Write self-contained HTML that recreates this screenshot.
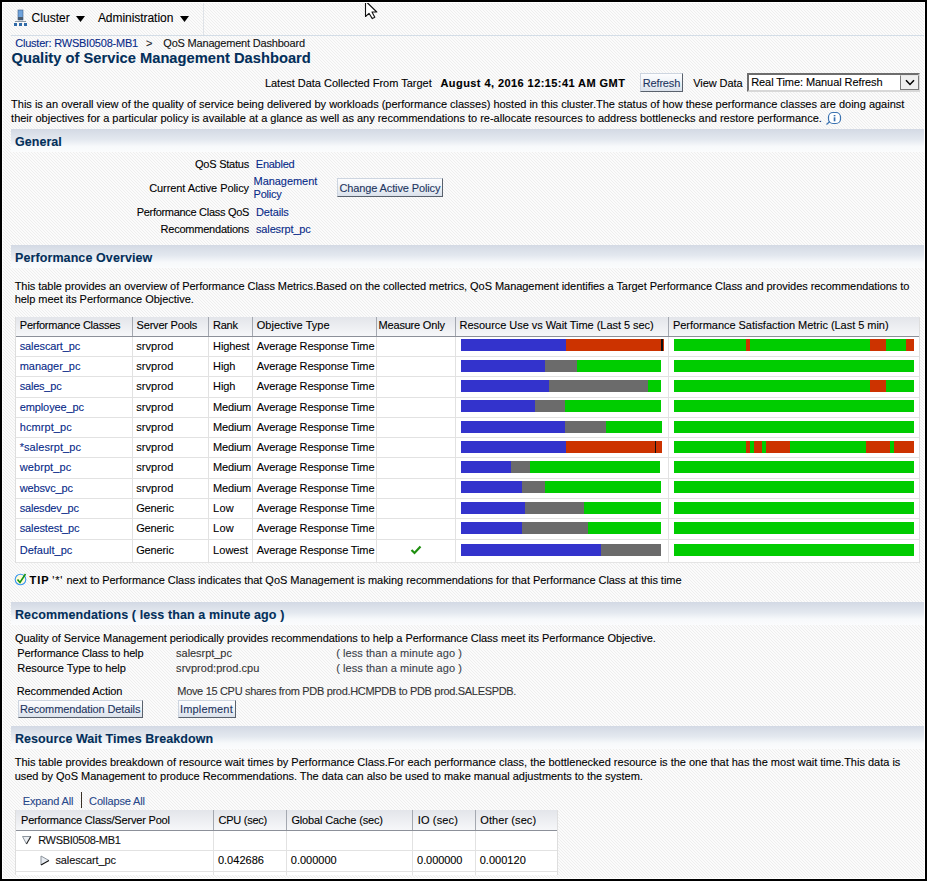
<!DOCTYPE html><html><head><meta charset='utf-8'><style>
html,body{margin:0;padding:0;}
body{width:927px;height:881px;position:relative;overflow:hidden;background:#fafafa;font-family:'Liberation Sans', sans-serif;}
.t{position:absolute;white-space:pre;font-family:'Liberation Sans', sans-serif;-webkit-text-stroke-width:0.1px;}
.btn{position:absolute;border:1px solid #cdd5e0;border-right-color:#59616c;border-bottom-color:#59616c;background:linear-gradient(#fdfdfe,#eef2f7 50%,#dae1eb);}
.sel{position:absolute;box-sizing:border-box;border:2px solid #6d6d6d;border-right-color:#d8d8d8;border-bottom-color:#d8d8d8;background:#fff;}
.selbtn{position:absolute;box-sizing:border-box;border:1px solid #7a7a7a;border-top-color:#e6e6e6;background:#efefef;}
</style></head><body><svg style="position:absolute;left:0;top:0" width="927" height="881" shape-rendering="crispEdges">
<defs><pattern id="hp" width="3" height="3" patternUnits="userSpaceOnUse"><rect width="3" height="3" fill="#fbfbfb"/><rect x="2" y="0" width="1" height="1" fill="#eeeeee"/><rect x="0" y="1" width="1" height="1" fill="#eeeeee"/><rect x="1" y="2" width="1" height="1" fill="#eeeeee"/></pattern></defs>
<rect width="927" height="881" fill="url(#hp)"/></svg><svg style="position:absolute;left:0;top:0" width="40" height="30">
<rect x="18" y="10" width="5" height="7" fill="#6fa3dc"/><rect x="18" y="17" width="5" height="3" fill="#4b5a6b"/>
<rect x="18" y="10" width="5" height="10" fill="none" stroke="#3f5f86" stroke-width="0.6"/>
<rect x="15" y="21" width="11" height="1" fill="#8a96a3"/>
<rect x="14" y="23" width="3" height="3" fill="#2f6aa8"/><rect x="19" y="23" width="3" height="3" fill="#2f6aa8"/><rect x="24" y="23" width="3" height="3" fill="#2f6aa8"/>
</svg><svg style="position:absolute;left:76px;top:16px" width="10" height="7"><polygon points="0,0 9,0 4.5,6" fill="#000"/></svg><svg style="position:absolute;left:180px;top:16px" width="10" height="7"><polygon points="0,0 9,0 4.5,6" fill="#000"/></svg><div style="position:absolute;left:203px;top:2px;width:1px;height:33px;background:#dfe3e8"></div><div style="position:absolute;left:11px;top:35px;width:914px;height:1px;background:#d3dde7"></div><div class="btn" style="left:640px;top:73px;width:41px;height:17px"></div><div class="sel" style="left:747px;top:73px;width:173px;height:19px"></div><div class="selbtn" style="left:900px;top:75px;width:19px;height:15px"></div><svg style="position:absolute;left:905px;top:79px" width="11" height="8"><polyline points="1,1.2 5,5.5 9,1.2" fill="none" stroke="#000" stroke-width="1.5"/></svg><svg style="position:absolute;left:825px;top:110px" width="18" height="16">
<rect x="3.5" y="2.5" width="12" height="11" rx="4.5" fill="#fff" stroke="#3a72b0" stroke-width="1.2"/>
<line x1="1.5" y1="14.5" x2="4.8" y2="11.5" stroke="#3a72b0" stroke-width="1.3"/>
<rect x="8.7" y="5" width="1.7" height="1.3" fill="#3a72b0"/><rect x="8.7" y="7.3" width="1.7" height="4" fill="#3a72b0"/>
</svg><div style="position:absolute;left:11px;top:129px;width:913px;height:23px;background:linear-gradient(#d3d9e4,#e3e8ef 45%,#f7f9fb 75%,#fbfcfd)"></div><div class="btn" style="left:337px;top:178px;width:104px;height:17px"></div><div style="position:absolute;left:11px;top:245px;width:913px;height:23px;background:linear-gradient(#d3d9e4,#e3e8ef 45%,#f7f9fb 75%,#fbfcfd)"></div><div style="position:absolute;left:15px;top:317px;width:905px;height:19px;background:linear-gradient(#e3e5ea,#f6f7f9)"></div><div style="position:absolute;left:15px;top:336px;width:905px;height:1px;background:#8c9099"></div><div style="position:absolute;left:15px;top:337px;width:905px;height:225px;background:#fff"></div><div style="position:absolute;left:15px;top:356px;width:905px;height:1px;background:#e2e2e2"></div><div style="position:absolute;left:15px;top:376px;width:905px;height:1px;background:#e2e2e2"></div><div style="position:absolute;left:15px;top:397px;width:905px;height:1px;background:#e2e2e2"></div><div style="position:absolute;left:15px;top:417px;width:905px;height:1px;background:#e2e2e2"></div><div style="position:absolute;left:15px;top:437px;width:905px;height:1px;background:#e2e2e2"></div><div style="position:absolute;left:15px;top:457px;width:905px;height:1px;background:#e2e2e2"></div><div style="position:absolute;left:15px;top:478px;width:905px;height:1px;background:#e2e2e2"></div><div style="position:absolute;left:15px;top:498px;width:905px;height:1px;background:#e2e2e2"></div><div style="position:absolute;left:15px;top:518px;width:905px;height:1px;background:#e2e2e2"></div><div style="position:absolute;left:15px;top:539px;width:905px;height:1px;background:#e2e2e2"></div><div style="position:absolute;left:15px;top:562px;width:905px;height:1px;background:#e4e4e4"></div><div style="position:absolute;left:15px;top:317px;width:1px;height:246px;background:#dedede"></div><div style="position:absolute;left:919px;top:317px;width:1px;height:246px;background:#dedede"></div><div style="position:absolute;left:132px;top:317px;width:1px;height:19px;background:#a4a8b0"></div><div style="position:absolute;left:132px;top:337px;width:1px;height:226px;background:#e2e2e2"></div><div style="position:absolute;left:208px;top:317px;width:1px;height:19px;background:#a4a8b0"></div><div style="position:absolute;left:208px;top:337px;width:1px;height:226px;background:#e2e2e2"></div><div style="position:absolute;left:252px;top:317px;width:1px;height:19px;background:#a4a8b0"></div><div style="position:absolute;left:252px;top:337px;width:1px;height:226px;background:#e2e2e2"></div><div style="position:absolute;left:376px;top:317px;width:1px;height:19px;background:#a4a8b0"></div><div style="position:absolute;left:376px;top:337px;width:1px;height:226px;background:#e2e2e2"></div><div style="position:absolute;left:455px;top:317px;width:1px;height:19px;background:#a4a8b0"></div><div style="position:absolute;left:455px;top:337px;width:1px;height:226px;background:#e2e2e2"></div><div style="position:absolute;left:668px;top:317px;width:1px;height:19px;background:#a4a8b0"></div><div style="position:absolute;left:668px;top:337px;width:1px;height:226px;background:#e2e2e2"></div><div style="position:absolute;left:461px;top:339px;width:202px;height:12px"><div style="position:absolute;left:0px;top:0;width:105px;height:12px;background:#3333cc"></div><div style="position:absolute;left:105px;top:0;width:95px;height:12px;background:#cc3300"></div><div style="position:absolute;left:200px;top:0;width:1.5px;height:12px;background:#111"></div><div style="position:absolute;left:201.5px;top:0;width:1px;height:12px;background:#cc3300"></div></div><div style="position:absolute;left:674px;top:339px;width:240px;height:12px"><div style="position:absolute;left:0px;top:0;width:72px;height:12px;background:#00cc00"></div><div style="position:absolute;left:72px;top:0;width:4px;height:12px;background:#cc3300"></div><div style="position:absolute;left:76px;top:0;width:120px;height:12px;background:#00cc00"></div><div style="position:absolute;left:196px;top:0;width:16px;height:12px;background:#cc3300"></div><div style="position:absolute;left:212px;top:0;width:20px;height:12px;background:#00cc00"></div><div style="position:absolute;left:232px;top:0;width:8px;height:12px;background:#cc3300"></div></div><div style="position:absolute;left:461px;top:360px;width:202px;height:12px"><div style="position:absolute;left:0px;top:0;width:84px;height:12px;background:#3333cc"></div><div style="position:absolute;left:84px;top:0;width:32px;height:12px;background:#6b6b6b"></div><div style="position:absolute;left:116px;top:0;width:84px;height:12px;background:#00cc00"></div></div><div style="position:absolute;left:674px;top:360px;width:240px;height:12px"><div style="position:absolute;left:0px;top:0;width:240px;height:12px;background:#00cc00"></div></div><div style="position:absolute;left:461px;top:380px;width:202px;height:12px"><div style="position:absolute;left:0px;top:0;width:88px;height:12px;background:#3333cc"></div><div style="position:absolute;left:88px;top:0;width:99px;height:12px;background:#6b6b6b"></div><div style="position:absolute;left:187px;top:0;width:13px;height:12px;background:#00cc00"></div></div><div style="position:absolute;left:674px;top:380px;width:240px;height:12px"><div style="position:absolute;left:0px;top:0;width:196px;height:12px;background:#00cc00"></div><div style="position:absolute;left:196px;top:0;width:16px;height:12px;background:#cc3300"></div><div style="position:absolute;left:212px;top:0;width:28px;height:12px;background:#00cc00"></div></div><div style="position:absolute;left:461px;top:400px;width:202px;height:12px"><div style="position:absolute;left:0px;top:0;width:74px;height:12px;background:#3333cc"></div><div style="position:absolute;left:74px;top:0;width:30px;height:12px;background:#6b6b6b"></div><div style="position:absolute;left:104px;top:0;width:96px;height:12px;background:#00cc00"></div></div><div style="position:absolute;left:674px;top:400px;width:240px;height:12px"><div style="position:absolute;left:0px;top:0;width:240px;height:12px;background:#00cc00"></div></div><div style="position:absolute;left:461px;top:421px;width:202px;height:12px"><div style="position:absolute;left:0px;top:0;width:104px;height:12px;background:#3333cc"></div><div style="position:absolute;left:104px;top:0;width:41px;height:12px;background:#6b6b6b"></div><div style="position:absolute;left:145px;top:0;width:56px;height:12px;background:#00cc00"></div></div><div style="position:absolute;left:674px;top:421px;width:240px;height:12px"><div style="position:absolute;left:0px;top:0;width:240px;height:12px;background:#00cc00"></div></div><div style="position:absolute;left:461px;top:441px;width:202px;height:12px"><div style="position:absolute;left:0px;top:0;width:105px;height:12px;background:#3333cc"></div><div style="position:absolute;left:105px;top:0;width:89px;height:12px;background:#cc3300"></div><div style="position:absolute;left:194px;top:0;width:1.2px;height:12px;background:#111"></div><div style="position:absolute;left:195.20000000000005px;top:0;width:5.8px;height:12px;background:#cc3300"></div></div><div style="position:absolute;left:674px;top:441px;width:240px;height:12px"><div style="position:absolute;left:0px;top:0;width:72px;height:12px;background:#00cc00"></div><div style="position:absolute;left:72px;top:0;width:4px;height:12px;background:#cc3300"></div><div style="position:absolute;left:76px;top:0;width:4px;height:12px;background:#00cc00"></div><div style="position:absolute;left:80px;top:0;width:8px;height:12px;background:#cc3300"></div><div style="position:absolute;left:88px;top:0;width:4px;height:12px;background:#00cc00"></div><div style="position:absolute;left:92px;top:0;width:24px;height:12px;background:#cc3300"></div><div style="position:absolute;left:116px;top:0;width:76px;height:12px;background:#00cc00"></div><div style="position:absolute;left:192px;top:0;width:24px;height:12px;background:#cc3300"></div><div style="position:absolute;left:216px;top:0;width:4px;height:12px;background:#00cc00"></div><div style="position:absolute;left:220px;top:0;width:20px;height:12px;background:#cc3300"></div></div><div style="position:absolute;left:461px;top:461px;width:202px;height:12px"><div style="position:absolute;left:0px;top:0;width:50px;height:12px;background:#3333cc"></div><div style="position:absolute;left:50px;top:0;width:19px;height:12px;background:#6b6b6b"></div><div style="position:absolute;left:69px;top:0;width:130px;height:12px;background:#00cc00"></div></div><div style="position:absolute;left:674px;top:461px;width:240px;height:12px"><div style="position:absolute;left:0px;top:0;width:240px;height:12px;background:#00cc00"></div></div><div style="position:absolute;left:461px;top:481px;width:202px;height:12px"><div style="position:absolute;left:0px;top:0;width:61px;height:12px;background:#3333cc"></div><div style="position:absolute;left:61px;top:0;width:23px;height:12px;background:#6b6b6b"></div><div style="position:absolute;left:84px;top:0;width:116px;height:12px;background:#00cc00"></div></div><div style="position:absolute;left:674px;top:481px;width:240px;height:12px"><div style="position:absolute;left:0px;top:0;width:240px;height:12px;background:#00cc00"></div></div><div style="position:absolute;left:461px;top:502px;width:202px;height:12px"><div style="position:absolute;left:0px;top:0;width:64px;height:12px;background:#3333cc"></div><div style="position:absolute;left:64px;top:0;width:59px;height:12px;background:#6b6b6b"></div><div style="position:absolute;left:123px;top:0;width:77px;height:12px;background:#00cc00"></div></div><div style="position:absolute;left:674px;top:502px;width:240px;height:12px"><div style="position:absolute;left:0px;top:0;width:240px;height:12px;background:#00cc00"></div></div><div style="position:absolute;left:461px;top:522px;width:202px;height:12px"><div style="position:absolute;left:0px;top:0;width:61px;height:12px;background:#3333cc"></div><div style="position:absolute;left:61px;top:0;width:66px;height:12px;background:#6b6b6b"></div><div style="position:absolute;left:127px;top:0;width:73px;height:12px;background:#00cc00"></div></div><div style="position:absolute;left:674px;top:522px;width:240px;height:12px"><div style="position:absolute;left:0px;top:0;width:240px;height:12px;background:#00cc00"></div></div><div style="position:absolute;left:461px;top:544px;width:202px;height:12px"><div style="position:absolute;left:0px;top:0;width:140px;height:12px;background:#3333cc"></div><div style="position:absolute;left:140px;top:0;width:60px;height:12px;background:#6b6b6b"></div></div><div style="position:absolute;left:674px;top:544px;width:240px;height:12px"><div style="position:absolute;left:0px;top:0;width:240px;height:12px;background:#00cc00"></div></div><svg style="position:absolute;left:410px;top:545px" width="12" height="10"><polyline points="1.5,5 4.5,8 10.5,1.5" fill="none" stroke="#1f8f10" stroke-width="2.2"/></svg><svg style="position:absolute;left:13px;top:570px" width="16" height="17">
<circle cx="7.5" cy="9.5" r="5.3" fill="#fffbd8" stroke="#3d98f0" stroke-width="1.1"/>
<polyline points="4.5,9.5 7,12.5 12.5,4" fill="none" stroke="#139413" stroke-width="1.6"/>
</svg><div style="position:absolute;left:11px;top:602px;width:913px;height:23px;background:linear-gradient(#d3d9e4,#e3e8ef 45%,#f7f9fb 75%,#fbfcfd)"></div><div class="btn" style="left:18px;top:700px;width:123px;height:16px"></div><div class="btn" style="left:178px;top:700px;width:56px;height:16px"></div><div style="position:absolute;left:11px;top:726px;width:913px;height:23px;background:linear-gradient(#d3d9e4,#e3e8ef 45%,#f7f9fb 75%,#fbfcfd)"></div><div style="position:absolute;left:81px;top:792px;width:1px;height:16px;background:#3a3026"></div><div style="position:absolute;left:15px;top:810px;width:543px;height:20px;background:linear-gradient(#e3e5ea,#f6f7f9)"></div><div style="position:absolute;left:15px;top:830px;width:543px;height:1px;background:#8c9099"></div><div style="position:absolute;left:15px;top:831px;width:543px;height:44px;background:#fff"></div><div style="position:absolute;left:15px;top:850px;width:543px;height:1px;background:#e2e2e2"></div><div style="position:absolute;left:15px;top:871px;width:543px;height:1px;background:#e2e2e2"></div><div style="position:absolute;left:15px;top:810px;width:1px;height:65px;background:#dedede"></div><div style="position:absolute;left:557px;top:810px;width:1px;height:65px;background:#dedede"></div><div style="position:absolute;left:213px;top:810px;width:1px;height:20px;background:#a4a8b0"></div><div style="position:absolute;left:213px;top:831px;width:1px;height:44px;background:#e2e2e2"></div><div style="position:absolute;left:286px;top:810px;width:1px;height:20px;background:#a4a8b0"></div><div style="position:absolute;left:286px;top:831px;width:1px;height:44px;background:#e2e2e2"></div><div style="position:absolute;left:412px;top:810px;width:1px;height:20px;background:#a4a8b0"></div><div style="position:absolute;left:412px;top:831px;width:1px;height:44px;background:#e2e2e2"></div><div style="position:absolute;left:475px;top:810px;width:1px;height:20px;background:#a4a8b0"></div><div style="position:absolute;left:475px;top:831px;width:1px;height:44px;background:#e2e2e2"></div><svg style="position:absolute;left:21px;top:835px" width="12" height="11"><polygon points="1.5,1.5 9.8,1.5 5.5,9" fill="#eceff3"/><line x1="1.5" y1="1.5" x2="9.8" y2="1.5" stroke="#8c949c" stroke-width="1"/><line x1="1.5" y1="1.5" x2="5.5" y2="9" stroke="#8c949c" stroke-width="1"/><line x1="9.8" y1="1.5" x2="5.5" y2="9" stroke="#222" stroke-width="1.1"/></svg><svg style="position:absolute;left:40px;top:855px" width="11" height="11"><polygon points="1,1 9,5.5 1,10" fill="#e8ecf2"/><line x1="1" y1="1" x2="1" y2="10" stroke="#8c949c" stroke-width="1"/><line x1="1" y1="1" x2="9" y2="5.5" stroke="#8c949c" stroke-width="1"/><line x1="9" y1="5.5" x2="1" y2="10" stroke="#111" stroke-width="1.1"/></svg><svg style="position:absolute;left:360px;top:0" width="24" height="22"><polygon points="5.5,1 5.5,16.5 9,13.3 12.3,18.6 14.8,17.3 12,12 16.8,12" fill="#fff" stroke="#111" stroke-width="1.1" stroke-linejoin="round"/></svg><div class="t" id="t0" style="top:12px;font-size:12px;line-height:12px;font-weight:normal;color:#000;letter-spacing:0.041px;left:31.5px;">Cluster</div><div class="t" id="t1" style="top:12px;font-size:12px;line-height:12px;font-weight:normal;color:#000;letter-spacing:-0.045px;left:97.9px;">Administration</div><div class="t" id="t2" style="top:38px;font-size:11px;line-height:11px;font-weight:normal;color:#082a88;letter-spacing:-0.217px;left:15.2px;">Cluster: RWSBI0508-MB1</div><div class="t" id="t3" style="top:38px;font-size:11px;line-height:11px;font-weight:normal;color:#222;letter-spacing:0.763px;left:146.1px;">&gt;</div><div class="t" id="t4" style="top:38px;font-size:11px;line-height:11px;font-weight:normal;color:#111;letter-spacing:-0.190px;left:163.3px;">QoS Management Dashboard</div><div class="t" id="t5" style="top:51px;font-size:14.7px;line-height:14.7px;font-weight:bold;color:#032f5a;letter-spacing:0.015px;left:11.5px;">Quality of Service Management Dashboard</div><div class="t" id="t6" style="top:78px;font-size:11px;line-height:11px;font-weight:normal;color:#000;letter-spacing:-0.016px;left:264.9px;">Latest Data Collected From Target</div><div class="t" id="t7" style="top:78px;font-size:11px;line-height:11px;font-weight:bold;color:#000;letter-spacing:0.427px;left:440.5px;">August 4, 2016 12:15:41 AM GMT</div><div class="t" id="t8" style="top:78px;font-size:11px;line-height:11px;font-weight:normal;color:#1e3560;letter-spacing:-0.176px;left:642.8px;">Refresh</div><div class="t" id="t9" style="top:78px;font-size:11px;line-height:11px;font-weight:normal;color:#000;letter-spacing:-0.082px;left:693.3px;">View Data</div><div class="t" id="t10" style="top:77px;font-size:11px;line-height:11px;font-weight:normal;color:#000;letter-spacing:-0.079px;left:751.2px;">Real Time: Manual Refresh</div><div class="t" id="t11" style="top:99px;font-size:11px;line-height:11px;font-weight:normal;color:#000;letter-spacing:-0.007px;left:11.1px;">This is an overall view of the quality of service being delivered by workloads (performance classes) hosted in this cluster.The status of how these performance classes are doing against</div><div class="t" id="t12" style="top:113px;font-size:11px;line-height:11px;font-weight:normal;color:#000;letter-spacing:-0.011px;left:11.1px;">their objectives for a particular policy is available at a glance as well as any recommendations to re-allocate resources to address bottlenecks and restore performance.</div><div class="t" id="t13" style="top:136px;font-size:12.5px;line-height:12.5px;font-weight:bold;color:#032f5a;letter-spacing:0.034px;left:15.0px;">General</div><div class="t" id="t14" style="top:159px;font-size:11px;line-height:11px;font-weight:normal;color:#000;letter-spacing:-0.227px;right:678.0px;">QoS Status</div><div class="t" id="t15" style="top:159px;font-size:11px;line-height:11px;font-weight:normal;color:#082a88;letter-spacing:-0.254px;left:255.8px;">Enabled</div><div class="t" id="t16" style="top:183px;font-size:11px;line-height:11px;font-weight:normal;color:#000;letter-spacing:-0.080px;right:678.0px;">Current Active Policy</div><div class="t" id="t17" style="top:176px;font-size:11px;line-height:11px;font-weight:normal;color:#082a88;letter-spacing:-0.062px;left:253.6px;">Management</div><div class="t" id="t18" style="top:189px;font-size:11px;line-height:11px;font-weight:normal;color:#082a88;letter-spacing:-0.257px;left:253.6px;">Policy</div><div class="t" id="t19" style="top:183px;font-size:11px;line-height:11px;font-weight:normal;color:#1e3560;letter-spacing:-0.127px;left:339.5px;">Change Active Policy</div><div class="t" id="t20" style="top:207px;font-size:11px;line-height:11px;font-weight:normal;color:#000;letter-spacing:-0.300px;right:678.0px;">Performance Class QoS</div><div class="t" id="t21" style="top:207px;font-size:11px;line-height:11px;font-weight:normal;color:#082a88;letter-spacing:-0.132px;left:256.0px;">Details</div><div class="t" id="t22" style="top:224px;font-size:11px;line-height:11px;font-weight:normal;color:#000;letter-spacing:-0.215px;right:678.0px;">Recommendations</div><div class="t" id="t23" style="top:224px;font-size:11px;line-height:11px;font-weight:normal;color:#082a88;letter-spacing:-0.142px;left:256.0px;">salesrpt_pc</div><div class="t" id="t24" style="top:252px;font-size:12.5px;line-height:12.5px;font-weight:bold;color:#032f5a;letter-spacing:0.095px;left:15.0px;">Performance Overview</div><div class="t" id="t25" style="top:281px;font-size:11px;line-height:11px;font-weight:normal;color:#000;letter-spacing:-0.053px;left:14.7px;">This table provides an overview of Performance Class Metrics.Based on the collected metrics, QoS Management identifies a Target Performance Class and provides recommendations to</div><div class="t" id="t26" style="top:294px;font-size:11px;line-height:11px;font-weight:normal;color:#000;letter-spacing:-0.035px;left:14.7px;">help meet its Performance Objective.</div><div class="t" id="t27" style="top:320px;font-size:11px;line-height:11px;font-weight:normal;color:#000;letter-spacing:-0.245px;left:19.8px;">Performance Classes</div><div class="t" id="t28" style="top:320px;font-size:11px;line-height:11px;font-weight:normal;color:#000;letter-spacing:-0.207px;left:136.6px;">Server Pools</div><div class="t" id="t29" style="top:320px;font-size:11px;line-height:11px;font-weight:normal;color:#000;letter-spacing:-0.197px;left:212.9px;">Rank</div><div class="t" id="t30" style="top:320px;font-size:11px;line-height:11px;font-weight:normal;color:#000;letter-spacing:0.024px;left:256.7px;">Objective Type</div><div class="t" id="t31" style="top:320px;font-size:11px;line-height:11px;font-weight:normal;color:#000;letter-spacing:-0.199px;left:378.6px;">Measure Only</div><div class="t" id="t32" style="top:320px;font-size:11px;line-height:11px;font-weight:normal;color:#000;letter-spacing:-0.048px;left:459.6px;">Resource Use vs Wait Time (Last 5 sec)</div><div class="t" id="t33" style="top:320px;font-size:11px;line-height:11px;font-weight:normal;color:#000;letter-spacing:-0.030px;left:672.9px;">Performance Satisfaction Metric (Last 5 min)</div><div class="t" id="t34" style="top:341px;font-size:11px;line-height:11px;font-weight:normal;color:#082a88;letter-spacing:-0.097px;left:19.7px;">salescart_pc</div><div class="t" id="t35" style="top:341px;font-size:11px;line-height:11px;font-weight:normal;color:#000;letter-spacing:0.073px;left:136.2px;">srvprod</div><div class="t" id="t36" style="top:341px;font-size:11px;line-height:11px;font-weight:normal;color:#000;letter-spacing:-0.128px;left:213.1px;">Highest</div><div class="t" id="t37" style="top:341px;font-size:11px;line-height:11px;font-weight:normal;color:#000;letter-spacing:-0.127px;left:256.8px;">Average Response Time</div><div class="t" id="t38" style="top:361px;font-size:11px;line-height:11px;font-weight:normal;color:#082a88;letter-spacing:-0.046px;left:19.7px;">manager_pc</div><div class="t" id="t39" style="top:361px;font-size:11px;line-height:11px;font-weight:normal;color:#000;letter-spacing:0.073px;left:136.2px;">srvprod</div><div class="t" id="t40" style="top:361px;font-size:11px;line-height:11px;font-weight:normal;color:#000;letter-spacing:-0.156px;left:213.1px;">High</div><div class="t" id="t41" style="top:361px;font-size:11px;line-height:11px;font-weight:normal;color:#000;letter-spacing:-0.127px;left:256.8px;">Average Response Time</div><div class="t" id="t42" style="top:381px;font-size:11px;line-height:11px;font-weight:normal;color:#082a88;letter-spacing:-0.203px;left:19.7px;">sales_pc</div><div class="t" id="t43" style="top:381px;font-size:11px;line-height:11px;font-weight:normal;color:#000;letter-spacing:0.073px;left:136.2px;">srvprod</div><div class="t" id="t44" style="top:381px;font-size:11px;line-height:11px;font-weight:normal;color:#000;letter-spacing:-0.156px;left:213.1px;">High</div><div class="t" id="t45" style="top:381px;font-size:11px;line-height:11px;font-weight:normal;color:#000;letter-spacing:-0.127px;left:256.8px;">Average Response Time</div><div class="t" id="t46" style="top:402px;font-size:11px;line-height:11px;font-weight:normal;color:#082a88;letter-spacing:-0.103px;left:19.7px;">employee_pc</div><div class="t" id="t47" style="top:402px;font-size:11px;line-height:11px;font-weight:normal;color:#000;letter-spacing:0.073px;left:136.2px;">srvprod</div><div class="t" id="t48" style="top:402px;font-size:11px;line-height:11px;font-weight:normal;color:#000;letter-spacing:-0.188px;left:213.1px;">Medium</div><div class="t" id="t49" style="top:402px;font-size:11px;line-height:11px;font-weight:normal;color:#000;letter-spacing:-0.127px;left:256.8px;">Average Response Time</div><div class="t" id="t50" style="top:422px;font-size:11px;line-height:11px;font-weight:normal;color:#082a88;letter-spacing:0.082px;left:19.7px;">hcmrpt_pc</div><div class="t" id="t51" style="top:422px;font-size:11px;line-height:11px;font-weight:normal;color:#000;letter-spacing:0.073px;left:136.2px;">srvprod</div><div class="t" id="t52" style="top:422px;font-size:11px;line-height:11px;font-weight:normal;color:#000;letter-spacing:-0.188px;left:213.1px;">Medium</div><div class="t" id="t53" style="top:422px;font-size:11px;line-height:11px;font-weight:normal;color:#000;letter-spacing:-0.127px;left:256.8px;">Average Response Time</div><div class="t" id="t54" style="top:442px;font-size:11px;line-height:11px;font-weight:normal;color:#082a88;letter-spacing:0.071px;left:19.7px;">*salesrpt_pc</div><div class="t" id="t55" style="top:442px;font-size:11px;line-height:11px;font-weight:normal;color:#000;letter-spacing:0.073px;left:136.2px;">srvprod</div><div class="t" id="t56" style="top:442px;font-size:11px;line-height:11px;font-weight:normal;color:#000;letter-spacing:-0.188px;left:213.1px;">Medium</div><div class="t" id="t57" style="top:442px;font-size:11px;line-height:11px;font-weight:normal;color:#000;letter-spacing:-0.127px;left:256.8px;">Average Response Time</div><div class="t" id="t58" style="top:462px;font-size:11px;line-height:11px;font-weight:normal;color:#082a88;letter-spacing:0.093px;left:19.7px;">webrpt_pc</div><div class="t" id="t59" style="top:462px;font-size:11px;line-height:11px;font-weight:normal;color:#000;letter-spacing:0.073px;left:136.2px;">srvprod</div><div class="t" id="t60" style="top:462px;font-size:11px;line-height:11px;font-weight:normal;color:#000;letter-spacing:-0.188px;left:213.1px;">Medium</div><div class="t" id="t61" style="top:462px;font-size:11px;line-height:11px;font-weight:normal;color:#000;letter-spacing:-0.127px;left:256.8px;">Average Response Time</div><div class="t" id="t62" style="top:483px;font-size:11px;line-height:11px;font-weight:normal;color:#082a88;letter-spacing:-0.136px;left:19.7px;">websvc_pc</div><div class="t" id="t63" style="top:483px;font-size:11px;line-height:11px;font-weight:normal;color:#000;letter-spacing:0.073px;left:136.2px;">srvprod</div><div class="t" id="t64" style="top:483px;font-size:11px;line-height:11px;font-weight:normal;color:#000;letter-spacing:-0.188px;left:213.1px;">Medium</div><div class="t" id="t65" style="top:483px;font-size:11px;line-height:11px;font-weight:normal;color:#000;letter-spacing:-0.127px;left:256.8px;">Average Response Time</div><div class="t" id="t66" style="top:503px;font-size:11px;line-height:11px;font-weight:normal;color:#082a88;letter-spacing:-0.196px;left:19.7px;">salesdev_pc</div><div class="t" id="t67" style="top:503px;font-size:11px;line-height:11px;font-weight:normal;color:#000;letter-spacing:-0.133px;left:136.2px;">Generic</div><div class="t" id="t68" style="top:503px;font-size:11px;line-height:11px;font-weight:normal;color:#000;letter-spacing:0.204px;left:213.1px;">Low</div><div class="t" id="t69" style="top:503px;font-size:11px;line-height:11px;font-weight:normal;color:#000;letter-spacing:-0.127px;left:256.8px;">Average Response Time</div><div class="t" id="t70" style="top:523px;font-size:11px;line-height:11px;font-weight:normal;color:#082a88;letter-spacing:-0.113px;left:19.7px;">salestest_pc</div><div class="t" id="t71" style="top:523px;font-size:11px;line-height:11px;font-weight:normal;color:#000;letter-spacing:-0.133px;left:136.2px;">Generic</div><div class="t" id="t72" style="top:523px;font-size:11px;line-height:11px;font-weight:normal;color:#000;letter-spacing:0.204px;left:213.1px;">Low</div><div class="t" id="t73" style="top:523px;font-size:11px;line-height:11px;font-weight:normal;color:#000;letter-spacing:-0.127px;left:256.8px;">Average Response Time</div><div class="t" id="t74" style="top:545px;font-size:11px;line-height:11px;font-weight:normal;color:#082a88;letter-spacing:0.001px;left:19.7px;">Default_pc</div><div class="t" id="t75" style="top:545px;font-size:11px;line-height:11px;font-weight:normal;color:#000;letter-spacing:-0.133px;left:136.2px;">Generic</div><div class="t" id="t76" style="top:545px;font-size:11px;line-height:11px;font-weight:normal;color:#000;letter-spacing:0.023px;left:213.1px;">Lowest</div><div class="t" id="t77" style="top:545px;font-size:11px;line-height:11px;font-weight:normal;color:#000;letter-spacing:-0.127px;left:256.8px;">Average Response Time</div><div class="t" id="t78" style="top:575px;font-size:11px;line-height:11px;font-weight:bold;color:#000;letter-spacing:0.892px;left:29.6px;">TIP</div><div class="t" id="t79" style="top:575px;font-size:11px;line-height:11px;font-weight:normal;color:#000;letter-spacing:0.772px;left:52.3px;">&#x27;*&#x27;</div><div class="t" id="t80" style="top:575px;font-size:11px;line-height:11px;font-weight:normal;color:#000;letter-spacing:-0.041px;left:66.5px;">next to Performance Class indicates that QoS Management is making recommendations for that Performance Class at this time</div><div class="t" id="t81" style="top:609px;font-size:12.5px;line-height:12.5px;font-weight:bold;color:#032f5a;letter-spacing:0.097px;left:15.0px;">Recommendations ( less than a minute ago )</div><div class="t" id="t82" style="top:633px;font-size:11px;line-height:11px;font-weight:normal;color:#000;letter-spacing:-0.057px;left:14.9px;">Quality of Service Management periodically provides recommendations to help a Performance Class meet its Performance Objective.</div><div class="t" id="t83" style="top:648px;font-size:11px;line-height:11px;font-weight:normal;color:#000;letter-spacing:-0.141px;left:17.3px;">Performance Class to help</div><div class="t" id="t84" style="top:648px;font-size:11px;line-height:11px;font-weight:normal;color:#333;letter-spacing:-0.042px;left:176.1px;">salesrpt_pc</div><div class="t" id="t85" style="top:648px;font-size:11px;line-height:11px;font-weight:normal;color:#3a3f48;letter-spacing:0.064px;left:336.2px;">( less than a minute ago )</div><div class="t" id="t86" style="top:663px;font-size:11px;line-height:11px;font-weight:normal;color:#000;letter-spacing:-0.065px;left:17.3px;">Resource Type to help</div><div class="t" id="t87" style="top:663px;font-size:11px;line-height:11px;font-weight:normal;color:#333;letter-spacing:0.047px;left:176.1px;">srvprod:prod.cpu</div><div class="t" id="t88" style="top:663px;font-size:11px;line-height:11px;font-weight:normal;color:#3a3f48;letter-spacing:0.064px;left:336.2px;">( less than a minute ago )</div><div class="t" id="t89" style="top:686px;font-size:11px;line-height:11px;font-weight:normal;color:#000;letter-spacing:-0.113px;left:16.7px;">Recommended Action</div><div class="t" id="t90" style="top:686px;font-size:11px;line-height:11px;font-weight:normal;color:#333;letter-spacing:-0.319px;left:177.3px;">Move 15 CPU shares from PDB prod.HCMPDB to PDB prod.SALESPDB.</div><div class="t" id="t91" style="top:704px;font-size:11px;line-height:11px;font-weight:normal;color:#1e3560;letter-spacing:-0.113px;left:19.9px;">Recommendation Details</div><div class="t" id="t92" style="top:704px;font-size:11px;line-height:11px;font-weight:normal;color:#1e3560;letter-spacing:0.182px;left:179.9px;">Implement</div><div class="t" id="t93" style="top:733px;font-size:12.5px;line-height:12.5px;font-weight:bold;color:#032f5a;letter-spacing:0.052px;left:15.0px;">Resource Wait Times Breakdown</div><div class="t" id="t94" style="top:757px;font-size:11px;line-height:11px;font-weight:normal;color:#000;letter-spacing:-0.005px;left:14.7px;">This table provides breakdown of resource wait times by Performance Class.For each performance class, the bottlenecked resource is the one that has the most wait time.This data is</div><div class="t" id="t95" style="top:771px;font-size:11px;line-height:11px;font-weight:normal;color:#000;letter-spacing:-0.028px;left:14.7px;">used by QoS Management to produce Recommendations. The data can also be used to make manual adjustments to the system.</div><div class="t" id="t96" style="top:796px;font-size:11px;line-height:11px;font-weight:normal;color:#27478a;letter-spacing:-0.148px;left:22.8px;">Expand All</div><div class="t" id="t97" style="top:796px;font-size:11px;line-height:11px;font-weight:normal;color:#27478a;letter-spacing:-0.149px;left:89.1px;">Collapse All</div><div class="t" id="t98" style="top:815px;font-size:11px;line-height:11px;font-weight:normal;color:#000;letter-spacing:-0.181px;left:21.0px;">Performance Class/Server Pool</div><div class="t" id="t99" style="top:815px;font-size:11px;line-height:11px;font-weight:normal;color:#000;letter-spacing:-0.248px;left:218.5px;">CPU (sec)</div><div class="t" id="t100" style="top:815px;font-size:11px;line-height:11px;font-weight:normal;color:#000;letter-spacing:-0.148px;left:291.4px;">Global Cache (sec)</div><div class="t" id="t101" style="top:815px;font-size:11px;line-height:11px;font-weight:normal;color:#000;letter-spacing:0.134px;left:417.8px;">IO (sec)</div><div class="t" id="t102" style="top:815px;font-size:11px;line-height:11px;font-weight:normal;color:#000;letter-spacing:0.080px;left:480.3px;">Other (sec)</div><div class="t" id="t103" style="top:835px;font-size:11px;line-height:11px;font-weight:normal;color:#111;letter-spacing:-0.331px;left:38.2px;">RWSBI0508-MB1</div><div class="t" id="t104" style="top:855px;font-size:11px;line-height:11px;font-weight:normal;color:#111;letter-spacing:-0.097px;left:55.4px;">salescart_pc</div><div class="t" id="t105" style="top:855px;font-size:11px;line-height:11px;font-weight:normal;color:#000;letter-spacing:0.026px;left:217.9px;">0.042686</div><div class="t" id="t106" style="top:855px;font-size:11px;line-height:11px;font-weight:normal;color:#000;letter-spacing:-0.011px;left:290.8px;">0.000000</div><div class="t" id="t107" style="top:855px;font-size:11px;line-height:11px;font-weight:normal;color:#000;letter-spacing:-0.086px;left:417.1px;">0.000000</div><div class="t" id="t108" style="top:855px;font-size:11px;line-height:11px;font-weight:normal;color:#000;letter-spacing:0.026px;left:479.7px;">0.000120</div><div style="position:absolute;left:0;top:0;width:927px;height:2px;background:#000"></div>
<div style="position:absolute;left:0;top:0;width:2px;height:881px;background:#000"></div>
<div style="position:absolute;left:925px;top:0;width:2px;height:881px;background:#000"></div>
<div style="position:absolute;left:0;top:879px;width:927px;height:2px;background:#000"></div>
<div style="position:absolute;left:2px;top:2px;width:1px;height:877px;background:#fff"></div>
<div style="position:absolute;left:2px;top:2px;width:923px;height:1px;background:#fff"></div>
<div style="position:absolute;left:924px;top:2px;width:1px;height:877px;background:#fff"></div>
<div style="position:absolute;left:2px;top:878px;width:923px;height:1px;background:#fff"></div></body></html>
